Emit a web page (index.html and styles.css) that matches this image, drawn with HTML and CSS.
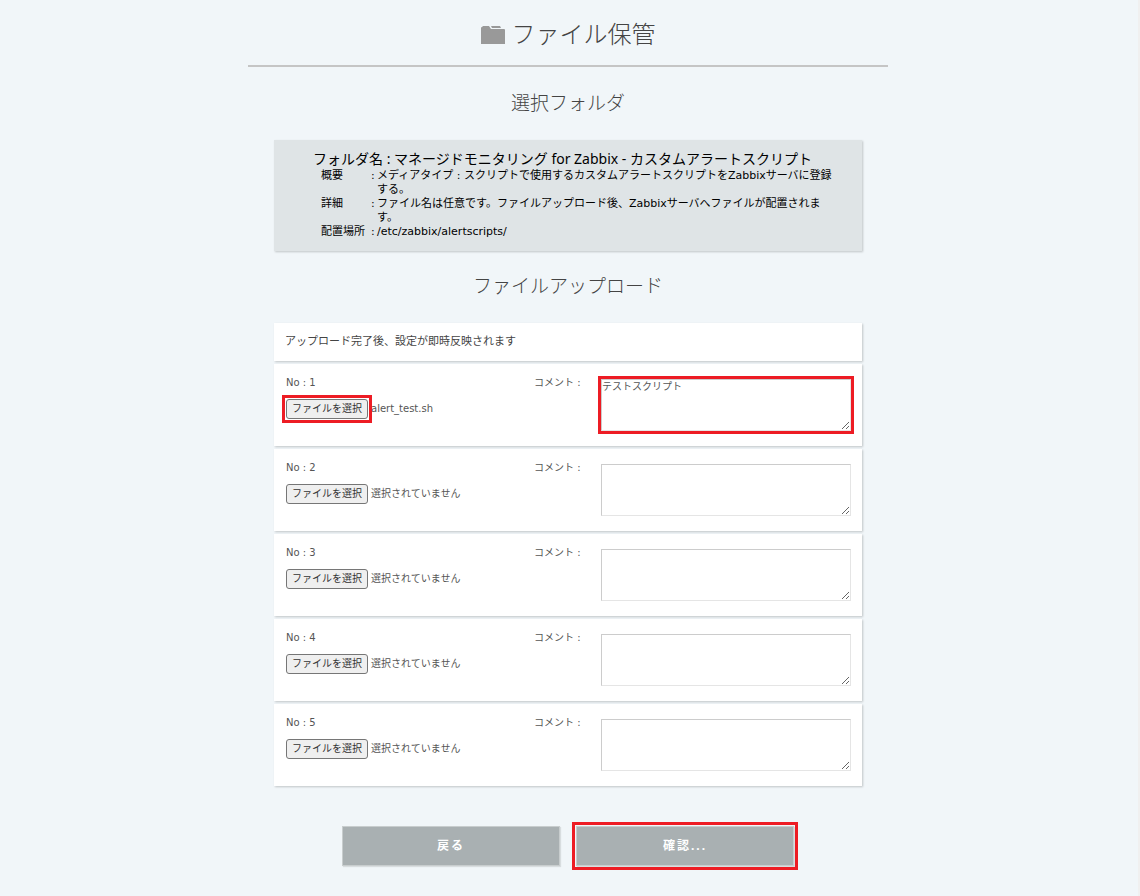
FILE: index.html
```html
<!DOCTYPE html>
<html lang="ja">
<head>
<meta charset="utf-8">
<meta name="viewport" content="width=device-width, initial-scale=1">
<title>ファイル保管</title>
<link rel="stylesheet" href="styles.css">
</head>
<body>
<main class="page">
  <header class="page-header">
    <svg class="folder-icon" viewBox="0 0 24 18" aria-hidden="true"><path d="M0 2 Q0 1 1 1 L2 0 H8 L10 3 H23 Q24 3 24 4 V18 H0Z"/><path d="M10 0 H19 L20 2 H11Z"/></svg>
    <h1 class="page-title">ファイル保管</h1>
  </header>
  <h2 class="section-title">選択フォルダ</h2>
  <section class="folder">
    <p class="folder-name">フォルダ名 : マネージドモニタリング for Zabbix - カスタムアラートスクリプト</p>
    <dl class="folder-details">
      <dt>概要</dt><dd>メディアタイプ : スクリプトで使用するカスタムアラートスクリプトをZabbixサーバに登録する。</dd>
      <dt>詳細</dt><dd>ファイル名は任意です。ファイルアップロード後、Zabbixサーバへファイルが配置されます。</dd>
      <dt>配置場所</dt><dd>/etc/zabbix/alertscripts/</dd>
    </dl>
  </section>
  <h2 class="section-title">ファイルアップロード</h2>
  <form class="upload">
    <p class="card notice">アップロード完了後、設定が即時反映されます</p>
    <div class="card row">
      <div class="file"><span class="number">No : 1</span><div class="picker"><button type="button" class="choose marked">ファイルを選択</button><span>alert_test.sh</span></div></div>
      <label for="comment1">コメント :</label>
      <textarea id="comment1" class="comment outlined">テストスクリプト</textarea>
    </div>
    <div class="card row">
      <div class="file"><span class="number">No : 2</span><div class="picker"><button type="button" class="choose">ファイルを選択</button><span>選択されていません</span></div></div>
      <label for="comment2">コメント :</label>
      <textarea id="comment2" class="comment"></textarea>
    </div>
    <div class="card row">
      <div class="file"><span class="number">No : 3</span><div class="picker"><button type="button" class="choose">ファイルを選択</button><span>選択されていません</span></div></div>
      <label for="comment3">コメント :</label>
      <textarea id="comment3" class="comment"></textarea>
    </div>
    <div class="card row">
      <div class="file"><span class="number">No : 4</span><div class="picker"><button type="button" class="choose">ファイルを選択</button><span>選択されていません</span></div></div>
      <label for="comment4">コメント :</label>
      <textarea id="comment4" class="comment"></textarea>
    </div>
    <div class="card row">
      <div class="file"><span class="number">No : 5</span><div class="picker"><button type="button" class="choose">ファイルを選択</button><span>選択されていません</span></div></div>
      <label for="comment5">コメント :</label>
      <textarea id="comment5" class="comment"></textarea>
    </div>
    <div class="actions">
      <button type="button" class="action">戻る</button>
      <button type="button" class="action marked">確認...</button>
    </div>
  </form>
</main>
</body>
</html>
```
FILE: styles.css
```css
* { box-sizing: border-box; }
body {
  margin: 0;
  padding-right: 2px;
  border-right: 2px solid #f0f0f0;
  background: #f1f6f9;
  color: #444;
  font-family: "DejaVu Sans", "Noto Sans CJK JP", sans-serif;
  font-size: 10px;
  line-height: 14px;
}
h1, h2, p, dl, dd { margin: 0; }
button, textarea { font: inherit; color: inherit; }
.page { max-width: 640px; min-height: 100vh; margin: 0 auto; }
.page-header {
  display: flex;
  align-items: center;
  justify-content: center;
  gap: 7px;
  padding: 17px 0 12px;
  border-bottom: 2px solid #c5c5c5;
}
.page-title { font-size: 24px; line-height: 36px; font-weight: 300; }
.folder-icon { width: 24px; height: 18px; fill: #999; }
.section-title {
  margin: 21px 0 22px;
  text-align: center;
  font-size: 19px;
  line-height: 30px;
  font-weight: 300;
}
.folder + .section-title { margin: 20px 0 22px; }
.folder {
  margin: 0 26px;
  padding: 10px 12px 12px 39px;
  background: #dfe4e6;
  color: #000;
  box-shadow: 1px 1px 2px rgba(0, 0, 0, .2);
}
.folder-name {
  font-family: "Noto Sans", "Noto Sans CJK JP", sans-serif;
  font-size: 14px;
  line-height: 18px;
}
.folder-details {
  display: grid;
  grid-template-columns: 50px 1fr;
  margin-top: 1px;
  padding: 0 14px 0 8px;
  font-size: 11px;
}
.folder-details dd { position: relative; padding-left: 6px; }
.folder-details dd::before { content: ":"; position: absolute; left: 0; }
.upload { display: grid; gap: 3px; margin: 0 26px; }
.card { background: #fff; box-shadow: 1px 1px 2px rgba(0, 0, 0, .2); }
.notice { padding: 12px 11px; font-size: 11px; }
.row {
  display: grid;
  grid-template-columns: 1fr 67px 250px;
  align-items: start;
  min-height: 82px;
  padding: 12px 11px 0 12px;
  color: #555;
}
.picker { display: flex; align-items: center; gap: 3px; margin-top: 9px; }
.choose {
  height: 20px;
  padding: 0 5px;
  border: 1px solid #767676;
  border-radius: 3px;
  background: #efefef;
  color: #333;
}
.comment {
  height: 52px;
  margin-top: 3px;
  padding: 0;
  border: 1px solid;
  border-color: #ccc #e5e5e5 #e5e5e5 #ccc;
  border-radius: 0;
  background: #fff;
  resize: both;
}
.actions { display: flex; justify-content: center; gap: 16px; padding: 37px 0 29px; }
.action {
  width: 218px;
  height: 40px;
  border: 1px solid #c8cdce;
  background: #a9b0b2;
  color: #fff;
  font-family: "Noto Sans", "Noto Sans CJK JP", sans-serif;
  font-size: 12px;
  font-weight: 700;
  letter-spacing: 2px;
  box-shadow: 1px 1px 1px rgba(0, 0, 0, .1);
}
.marked { position: relative; }
.marked::after {
  content: "";
  position: absolute;
  inset: -5px;
  border: 3px solid #ed1c24;
  pointer-events: none;
}
.outlined { outline: 3px solid #ed1c24; }
```
